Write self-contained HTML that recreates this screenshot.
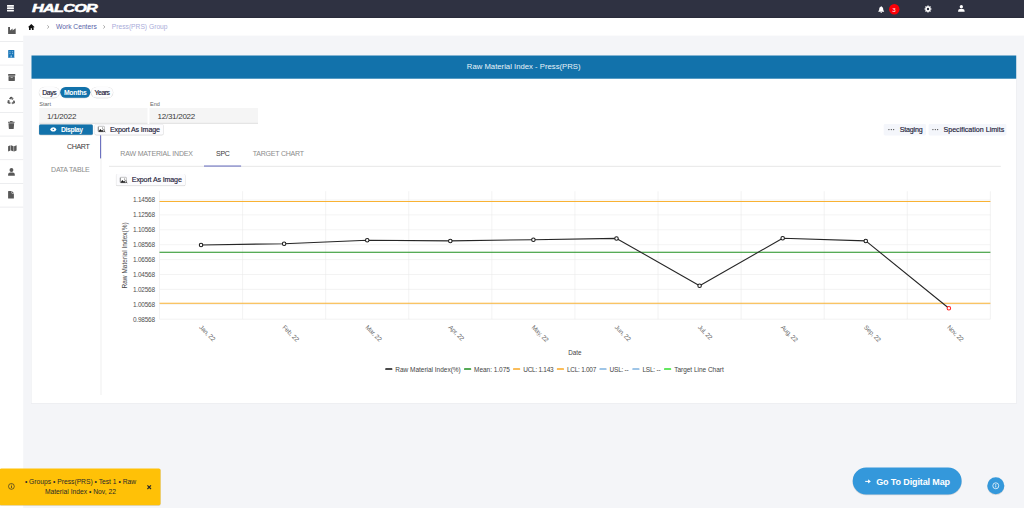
<!DOCTYPE html>
<html lang="en">
<head>
<meta charset="utf-8">
<title>Raw Material Index - Press(PRS)</title>
<style>
*{box-sizing:border-box;margin:0;padding:0}
html,body{width:1024px;height:508px;overflow:hidden}
body{background:#f4f5f8;font-family:"Liberation Sans",sans-serif;color:#333;position:relative}
.abs{position:absolute}
.t{position:absolute;white-space:nowrap;line-height:1}
svg{position:absolute;overflow:visible}
</style>
</head>
<body>

<svg id="bg" style="left:0;top:0" width="1024" height="508" viewBox="0 0 1024 508"><rect x="0" y="16" width="23.2" height="493" fill="#fff"/><rect x="23" y="16" width="1001" height="19.6" fill="#fff"/><rect x="0" y="0" width="1024" height="17.9" fill="#2f3242"/><rect x="0" y="16.9" width="1024" height="1" fill="#282b39"/><rect x="0" y="41.05" width="23.2" height="0.7" fill="#e4e5e8"/><rect x="0" y="64.72" width="23.2" height="0.7" fill="#e4e5e8"/><rect x="0" y="88.39" width="23.2" height="0.7" fill="#e4e5e8"/><rect x="0" y="112.06" width="23.2" height="0.7" fill="#e4e5e8"/><rect x="0" y="135.73" width="23.2" height="0.7" fill="#e4e5e8"/><rect x="0" y="159.40" width="23.2" height="0.7" fill="#e4e5e8"/><rect x="0" y="183.07" width="23.2" height="0.7" fill="#e4e5e8"/><rect x="0" y="206.74" width="23.2" height="0.7" fill="#e4e5e8"/><rect x="31.1" y="55.5" width="985.5" height="348.2" fill="#e6e8ec"/><rect x="31.5" y="55.5" width="984.7" height="347.7" fill="#fff"/><rect x="31.5" y="55.5" width="984.7" height="23.2" fill="#1272ab"/></svg>
<svg style="left:7.3px;top:5.2px" width="7" height="6.5" viewBox="0 0 7 6.5"><rect x="0" y="0" width="6.900" height="1.700" rx=".3" fill="#fff"/><rect x="0" y="2.350" width="6.900" height="1.700" rx=".3" fill="#fff"/><rect x="0" y="4.700" width="6.900" height="1.700" rx=".3" fill="#fff"/></svg>
<div class="t" id="logo" style="left:31.6px;top:2.4px;font-size:11.6px;font-weight:bold;font-style:italic;color:#fff;letter-spacing:-0.55px;-webkit-text-stroke:0.5px #fff;transform-origin:0 50%;transform:scaleX(1.405)">HALCOR</div>
<svg style="left:877.8px;top:5.6px" width="6.4" height="7" viewBox="0 0 6.4 7"><path d="M3.2.1a.45.45 0 0 1 .45.45v.25A2 2 0 0 1 5.2 2.8c0 1.4.4 1.9.85 2.35a.35.35 0 0 1-.25.6H.6a.35.35 0 0 1-.25-.6C.8 4.7 1.2 4.2 1.2 2.8A2 2 0 0 1 2.75.8V.55A.45.45 0 0 1 3.2.1z" fill="#fff"/><path d="M2.4 6.1h1.6a.8.8 0 0 1-1.6 0z" fill="#fff"/></svg>
<svg style="left:888.6px;top:4.2px" width="10.6" height="10.6" viewBox="0 0 10.6 10.6"><circle cx="5.3" cy="5.3" r="5.2" fill="#fb0007"/></svg>
<div class="t" style="top:7px;font-size:6.2px;color:#fff;left:693.90px;width:400px;text-align:center;">3</div>
<svg style="left:924.1px;top:4.5px" width="8" height="8" viewBox="-4 -4 8 8"><rect x="-0.62" y="-3.55" width="1.24" height="1.5" rx=".2" transform="rotate(0)" fill="#fff"/><rect x="-0.62" y="-3.55" width="1.24" height="1.5" rx=".2" transform="rotate(45)" fill="#fff"/><rect x="-0.62" y="-3.55" width="1.24" height="1.5" rx=".2" transform="rotate(90)" fill="#fff"/><rect x="-0.62" y="-3.55" width="1.24" height="1.5" rx=".2" transform="rotate(135)" fill="#fff"/><rect x="-0.62" y="-3.55" width="1.24" height="1.5" rx=".2" transform="rotate(180)" fill="#fff"/><rect x="-0.62" y="-3.55" width="1.24" height="1.5" rx=".2" transform="rotate(225)" fill="#fff"/><rect x="-0.62" y="-3.55" width="1.24" height="1.5" rx=".2" transform="rotate(270)" fill="#fff"/><rect x="-0.62" y="-3.55" width="1.24" height="1.5" rx=".2" transform="rotate(315)" fill="#fff"/><circle r="1.95" fill="none" stroke="#fff" stroke-width="1.5"/></svg>
<svg style="left:957.6px;top:5.1px" width="6.8" height="7" viewBox="0 0 6.8 7"><circle cx="3.35" cy="1.75" r="1.65" fill="#fff"/><path d="M.1 6.8V5.9a1.8 1.8 0 0 1 1.8-1.8h2.9a1.8 1.8 0 0 1 1.8 1.8v.9z" fill="#fff"/></svg>
<svg style="left:7.6px;top:26.6px" width="8" height="7.2" viewBox="0 0 8 7.2"><path d="M0.1 0.1h1.9v3.3l2.6-1.8v1.8l2.6-1.8h0.5v5.3H0.1z" fill="#585858"/></svg>
<svg style="left:7.8px;top:49.9px" width="6.6" height="7.8" viewBox="0 0 6.6 7.8"><rect x="0.2" y="0.1" width="6.1" height="7.3" rx=".5" fill="#1976b8"/><rect x="0" y="7.1" width="6.5" height=".5" fill="#1976b8"/><g fill="#8bbbe0"><rect x="1.4" y="1.3" width="1.2" height="1"/><rect x="3.9" y="1.3" width="1.2" height="1"/><rect x="1.4" y="3.1" width="1.2" height="1"/><rect x="3.9" y="3.1" width="1.2" height="1"/><rect x="2.5" y="5.4" width="1.5" height="2"/></g></svg>
<svg style="left:7.8px;top:73.7px" width="7.6" height="7.2" viewBox="0 0 7.6 7.2"><rect x="0.1" y="0.1" width="7.2" height="1.7" rx=".3" fill="#585858"/><path d="M0.5 2.3h6.4v4.2a.45.45 0 0 1-.45.45H.95A.45.45 0 0 1 .5 6.5z" fill="#585858"/><rect x="2.6" y="3.2" width="2.2" height=".8" rx=".3" fill="#c9c9c9"/></svg>
<svg style="left:7.3px;top:96.3px" width="8.4" height="8.4" viewBox="0 0 8.4 8.4"><path d="M2.71 3.23L3.23 2.33Q4.20 0.65 5.17 2.33L5.32 2.58M6.43 4.52L6.96 5.42Q7.92 7.10 5.99 7.10L5.69 7.10M3.46 7.10L2.41 7.10Q0.48 7.10 1.44 5.42L1.59 5.17" fill="none" stroke="#505050" stroke-width="1.5"/><path d="M5.94 3.67L4.06 3.31L6.57 1.86zM4.44 7.10L5.69 5.65L5.69 8.55zM2.22 4.08L2.85 5.89L0.34 4.44z" fill="#505050"/></svg>
<svg style="left:7.8px;top:120.7px" width="6.8" height="8.2" viewBox="0 0 6.8 8.2"><path d="M2.2.1h2.2l.4.6h1.5a.3.3 0 0 1 .3.3v.7H0V1A.3.3 0 0 1 .3.7h1.5z" fill="#585858"/><path d="M.45 2.2h5.7l-.4 5.2a.6.6 0 0 1-.6.55H1.45a.6.6 0 0 1-.6-.55z" fill="#585858"/></svg>
<svg style="left:7.6px;top:144.8px" width="9" height="6.8" viewBox="0 0 9 6.8"><path d="M0.1 1.3L2.5.3v5.3L.1 6.6z" fill="#585858"/><path d="M3 .3l2.6.9v5.3L3 5.6z" fill="#585858"/><path d="M6.1 1.2L8.6.2v5.3L6.1 6.5z" fill="#585858"/></svg>
<svg style="left:7.6px;top:167.9px" width="7" height="8" viewBox="0 0 7 8"><circle cx="3.45" cy="2" r="1.95" fill="#585858"/><path d="M.1 7.7V6.4a2 2 0 0 1 2-2h2.7a2 2 0 0 1 2 2v1.3z" fill="#585858"/></svg>
<svg style="left:7.7px;top:191.3px" width="6.2" height="7.8" viewBox="0 0 6.2 7.8"><path d="M.5.1h3.1v2a.4.4 0 0 0 .4.4h1.9v4.7a.4.4 0 0 1-.4.4H.5a.4.4 0 0 1-.4-.4V.5A.4.4 0 0 1 .5.1z" fill="#585858"/><path d="M4.1.2l1.7 1.8H4.1z" fill="#585858"/></svg>
<svg style="left:28.4px;top:23.8px" width="6.6" height="6.4" viewBox="0 0 6.6 6.4"><path d="M3.3.1L6.5 3l-.4.5-.5-.4v3h-1.7V4.2H2.7v1.9H1V3.1l-.5.4L.1 3z" fill="#111"/></svg>
<svg style="left:47.3px;top:24.9px" width="2.4" height="3.8" viewBox="0 0 2.4 3.8"><path d="M.3.3L2 1.9.3 3.5" fill="none" stroke="#8f8f8f" stroke-width=".75"/></svg>
<svg style="left:103.4px;top:24.9px" width="2.4" height="3.8" viewBox="0 0 2.4 3.8"><path d="M.3.3L2 1.9.3 3.5" fill="none" stroke="#8f8f8f" stroke-width=".75"/></svg>
<div class="t" style="top:24px;font-size:6.7px;color:#5a5fa8;left:56.00px;">Work Centers</div>
<div class="t" style="top:24px;font-size:6.7px;color:#a9acd9;left:111.80px;">Press(PRS) Group</div>
<div class="t" style="top:63px;font-size:7.72px;color:#e8f2f9;left:323.70px;width:400px;text-align:center;">Raw Material Index - Press(PRS)</div>
<svg style="left:0;top:0" width="1024" height="508"><rect x="38.60" y="86.7" width="21.40" height="11.900" rx="5.900" fill="rgba(0,0,0,.06)"/><rect x="38.95" y="86.9" width="20.70" height="11.300" rx="5.600" fill="rgba(0,0,0,.12)"/><rect x="39.1" y="86.9" width="20.40" height="10.900" rx="5.450" fill="#fdfdfe"/></svg>
<div class="t" style="top:90px;font-size:6.8px;color:#1c2038;letter-spacing:-0.35px;left:-150.70px;width:400px;text-align:center;-webkit-text-stroke:.18px;">Days</div>
<svg style="left:0;top:0" width="1024" height="508"><rect x="59.80" y="86.7" width="31.00" height="11.900" rx="5.900" fill="rgba(0,0,0,.06)"/><rect x="60.15" y="86.9" width="30.30" height="11.300" rx="5.600" fill="rgba(0,0,0,.12)"/><rect x="60.3" y="86.9" width="30.00" height="10.900" rx="5.450" fill="#1272ab"/></svg>
<div class="t" style="top:90px;font-size:6.8px;color:#fff;font-weight:bold;letter-spacing:-0.245px;left:-124.70px;width:400px;text-align:center;">Months</div>
<svg style="left:0;top:0" width="1024" height="508"><rect x="90.70" y="86.7" width="22.80" height="11.900" rx="5.900" fill="rgba(0,0,0,.06)"/><rect x="91.05" y="86.9" width="22.10" height="11.300" rx="5.600" fill="rgba(0,0,0,.12)"/><rect x="91.2" y="86.9" width="21.80" height="10.900" rx="5.450" fill="#fdfdfe"/></svg>
<div class="t" style="top:90px;font-size:6.8px;color:#1c2038;letter-spacing:-0.43px;left:-97.90px;width:400px;text-align:center;-webkit-text-stroke:.18px;">Years</div>
<div class="t" style="top:102px;font-size:5.6px;color:#666;left:39.20px;">Start</div>
<div class="t" style="top:102px;font-size:5.5px;color:#666;left:150.00px;">End</div>
<svg style="left:0;top:0" width="1024" height="508"><rect x="39.2" y="108" width="108.30" height="15.4" fill="#f5f5f5"/><rect x="39.2" y="122.9" width="108.30" height=".55" fill="#c9c9c9"/></svg>
<svg style="left:0;top:0" width="1024" height="508"><rect x="149.4" y="108" width="108.60" height="15.4" fill="#f5f5f5"/><rect x="149.4" y="122.9" width="108.60" height=".55" fill="#c9c9c9"/></svg>
<div class="t" style="top:113px;font-size:8px;color:#3a3a3a;letter-spacing:-0.25px;left:47.00px;">1/1/2022</div>
<div class="t" style="top:113px;font-size:8px;color:#3a3a3a;letter-spacing:-0.27px;left:157.60px;">12/31/2022</div>
<svg style="left:0;top:0" width="1024" height="508"><rect x="38.60" y="124.30" width="54.70" height="11.20" rx="1.900" fill="rgba(0,0,0,.07)"/><rect x="38.95" y="124.50" width="54.00" height="10.75" rx="1.600" fill="rgba(0,0,0,.13)"/><rect x="39.1" y="124.5" width="53.70" height="10.30" rx="1.400" fill="#1272ab"/></svg>
<svg style="left:49.6px;top:127.2px" width="6.6" height="4.8" viewBox="0 0 6.6 4.8"><path d="M.1 2.4C1 .9 2.1.2 3.300 .2S5.600 .9 6.500 2.400C5.600 3.900 4.500 4.600 3.300 4.600S1 3.900 .1 2.400z" fill="#fff"/><circle cx="3.300" cy="2.400" r=".7" fill="#1272ab"/></svg>
<div class="t" style="top:127px;font-size:6.8px;color:#fff;font-weight:bold;letter-spacing:-0.33px;left:60.90px;">Display</div>
<svg style="left:0;top:0" width="1024" height="508"><rect x="94.40" y="124.10" width="69.40" height="11.40" rx="1.900" fill="rgba(0,0,0,.07)"/><rect x="94.75" y="124.30" width="68.70" height="10.95" rx="1.600" fill="rgba(0,0,0,.13)"/><rect x="94.9" y="124.3" width="68.40" height="10.50" rx="1.400" fill="#fcfcfe"/></svg>
<svg style="left:97.7px;top:126.3px" width="7.6" height="6.8" viewBox="0 0 7.6 6.8"><rect x=".3" y=".3" width="6.1" height="5.5" rx=".5" fill="#fff" stroke="#8a8a8a" stroke-width=".5"/><path d="M.3 .8v4.500" stroke="#444" stroke-width=".5"/><path d="M.4 5.700l1.900-2.700 1.300 1.500.9-.8 1.300 2z" fill="#151515"/><circle cx="4.500" cy="2" r=".55" fill="#555"/><circle cx="5.600" cy="4.300" r=".9" fill="#fff" stroke="#444" stroke-width=".5"/><path d="M6.200 5l1 1.200" stroke="#222" stroke-width=".75"/></svg>
<div class="t" style="top:127px;font-size:7.1px;color:#1c2038;letter-spacing:-0.143px;left:109.90px;-webkit-text-stroke:.15px;">Export As Image</div>
<svg style="left:0;top:0" width="1024" height="508"><rect x="883.7" y="124.1" width="42.30" height="11.40" rx="1.400" fill="#f4f6fb"/></svg>
<svg style="left:0;top:0" width="1024" height="508"><rect x="928.6" y="124.1" width="77.80" height="11.40" rx="1.400" fill="#f4f6fb"/></svg>
<svg style="left:888.1px;top:129.0px" width="7" height="1.2" viewBox="0 0 7 1.2"><circle cx=".9" cy=".6" r=".6" fill="#333"/><circle cx="3.3" cy=".6" r=".6" fill="#333"/><circle cx="5.700" cy=".6" r=".6" fill="#333"/></svg>
<svg style="left:932.2px;top:129.0px" width="7" height="1.2" viewBox="0 0 7 1.2"><circle cx=".9" cy=".6" r=".6" fill="#333"/><circle cx="3.3" cy=".6" r=".6" fill="#333"/><circle cx="5.700" cy=".6" r=".6" fill="#333"/></svg>
<div class="t" style="top:127px;font-size:7.1px;color:#1c2038;letter-spacing:-0.166px;left:899.70px;-webkit-text-stroke:.15px;">Staging</div>
<div class="t" style="top:127px;font-size:7.1px;color:#1c2038;font-weight:-0.096;left:943.50px;-webkit-text-stroke:.15px;">Specification Limits</div>
<svg style="left:0;top:0" width="1024" height="508"><rect x="100.700" y="135.300" width=".6" height="259.800" fill="#e4e4e4"/><rect x="100.050" y="135.300" width="1.050" height="23.100" fill="#666cbd"/><rect x="109" y="165.900" width="891.800" height=".6" fill="#d8d8d8"/><rect x="204" y="165.500" width="37.100" height="1.100" fill="#6f75c2"/></svg>
<div class="t" style="top:144px;font-size:7.1px;color:#3a3a3a;letter-spacing:-0.38px;left:-310.60px;width:400px;text-align:right;">CHART</div>
<div class="t" style="top:166px;font-size:7px;color:#8c8c8c;letter-spacing:-0.23px;left:-310.50px;width:400px;text-align:right;">DATA TABLE</div>
<div class="t" style="top:150px;font-size:7px;color:#8c8c8c;letter-spacing:-0.17px;left:120.30px;">RAW MATERIAL INDEX</div>
<div class="t" style="top:150px;font-size:7px;color:#3a3a3a;letter-spacing:-0.27px;left:216.00px;">SPC</div>
<div class="t" style="top:150px;font-size:7px;color:#8c8c8c;letter-spacing:-0.21px;left:252.70px;">TARGET CHART</div>
<svg style="left:0;top:0" width="1024" height="508"><rect x="115.80" y="173.90" width="69.80" height="12.40" rx="1.900" fill="rgba(0,0,0,.07)"/><rect x="116.15" y="174.10" width="69.10" height="11.95" rx="1.600" fill="rgba(0,0,0,.13)"/><rect x="116.3" y="174.1" width="68.80" height="11.50" rx="1.400" fill="#fcfcfe"/></svg>
<svg style="left:119.7px;top:176.7px" width="7.6" height="6.8" viewBox="0 0 7.6 6.8"><rect x=".3" y=".3" width="6.1" height="5.5" rx=".5" fill="#fff" stroke="#8a8a8a" stroke-width=".5"/><path d="M.3 .8v4.500" stroke="#444" stroke-width=".5"/><path d="M.4 5.700l1.900-2.700 1.300 1.500.9-.8 1.300 2z" fill="#151515"/><circle cx="4.500" cy="2" r=".55" fill="#555"/><circle cx="5.600" cy="4.300" r=".9" fill="#fff" stroke="#444" stroke-width=".5"/><path d="M6.200 5l1 1.200" stroke="#222" stroke-width=".75"/></svg>
<div class="t" style="top:177px;font-size:7.1px;color:#1c2038;letter-spacing:-0.143px;left:131.80px;-webkit-text-stroke:.15px;">Export As Image</div>
<svg id="chart" style="left:0;top:0" width="1024" height="508" viewBox="0 0 1024 508" font-family="Liberation Sans, sans-serif">
<line x1="159.50" y1="191.2" x2="159.50" y2="319.2" stroke="#e9e9e9" stroke-width="0.55"/>
<line x1="242.59" y1="191.2" x2="242.59" y2="319.2" stroke="#e9e9e9" stroke-width="0.55"/>
<line x1="325.68" y1="191.2" x2="325.68" y2="319.2" stroke="#e9e9e9" stroke-width="0.55"/>
<line x1="408.77" y1="191.2" x2="408.77" y2="319.2" stroke="#e9e9e9" stroke-width="0.55"/>
<line x1="491.86" y1="191.2" x2="491.86" y2="319.2" stroke="#e9e9e9" stroke-width="0.55"/>
<line x1="574.95" y1="191.2" x2="574.95" y2="319.2" stroke="#e9e9e9" stroke-width="0.55"/>
<line x1="658.04" y1="191.2" x2="658.04" y2="319.2" stroke="#e9e9e9" stroke-width="0.55"/>
<line x1="741.13" y1="191.2" x2="741.13" y2="319.2" stroke="#e9e9e9" stroke-width="0.55"/>
<line x1="824.22" y1="191.2" x2="824.22" y2="319.2" stroke="#e9e9e9" stroke-width="0.55"/>
<line x1="907.31" y1="191.2" x2="907.31" y2="319.2" stroke="#e9e9e9" stroke-width="0.55"/>
<line x1="990.40" y1="191.2" x2="990.40" y2="319.2" stroke="#e9e9e9" stroke-width="0.55"/>
<line x1="159.5" y1="200.00" x2="990.4" y2="200.00" stroke="#e9e9e9" stroke-width="0.55"/>
<text x="132.9" y="202" font-size="6.45" textLength="22.2" lengthAdjust="spacing" fill="#4f4f4f">1.14568</text>
<line x1="159.5" y1="214.90" x2="990.4" y2="214.90" stroke="#e9e9e9" stroke-width="0.55"/>
<text x="132.9" y="217" font-size="6.45" textLength="22.2" lengthAdjust="spacing" fill="#4f4f4f">1.12568</text>
<line x1="159.5" y1="229.80" x2="990.4" y2="229.80" stroke="#e9e9e9" stroke-width="0.55"/>
<text x="132.9" y="232" font-size="6.45" textLength="22.2" lengthAdjust="spacing" fill="#4f4f4f">1.10568</text>
<line x1="159.5" y1="244.70" x2="990.4" y2="244.70" stroke="#e9e9e9" stroke-width="0.55"/>
<text x="132.9" y="247" font-size="6.45" textLength="22.2" lengthAdjust="spacing" fill="#4f4f4f">1.08568</text>
<line x1="159.5" y1="259.60" x2="990.4" y2="259.60" stroke="#e9e9e9" stroke-width="0.55"/>
<text x="132.9" y="262" font-size="6.45" textLength="22.2" lengthAdjust="spacing" fill="#4f4f4f">1.06568</text>
<line x1="159.5" y1="274.50" x2="990.4" y2="274.50" stroke="#e9e9e9" stroke-width="0.55"/>
<text x="132.9" y="277" font-size="6.45" textLength="22.2" lengthAdjust="spacing" fill="#4f4f4f">1.04568</text>
<line x1="159.5" y1="289.40" x2="990.4" y2="289.40" stroke="#e9e9e9" stroke-width="0.55"/>
<text x="132.9" y="292" font-size="6.45" textLength="22.2" lengthAdjust="spacing" fill="#4f4f4f">1.02568</text>
<line x1="159.5" y1="304.30" x2="990.4" y2="304.30" stroke="#e9e9e9" stroke-width="0.55"/>
<text x="132.9" y="307" font-size="6.45" textLength="22.2" lengthAdjust="spacing" fill="#4f4f4f">1.00568</text>
<line x1="159.5" y1="319.20" x2="990.4" y2="319.20" stroke="#e9e9e9" stroke-width="0.55"/>
<text x="132.9" y="322" font-size="6.45" textLength="22.2" lengthAdjust="spacing" fill="#4f4f4f">0.98568</text>
<line x1="159.5" y1="201.4" x2="990.4" y2="201.4" stroke="#f9b233" stroke-width="1.05"/>
<line x1="159.5" y1="303.2" x2="990.4" y2="303.2" stroke="#f9b233" stroke-width="1.05"/>
<line x1="159.5" y1="252.3" x2="990.4" y2="252.3" stroke="#1f8f1f" stroke-width="1.05"/>
<polyline points="201.05,245.00 284.13,243.70 367.23,240.30 450.31,240.90 533.40,239.70 616.50,238.40 699.59,285.70 782.68,238.30 865.76,240.90 948.86,308.20" fill="none" stroke="#262626" stroke-width="1.1" stroke-linejoin="round"/>
<circle cx="201.05" cy="245.00" r="1.75" fill="#fff" stroke="#1a1a1a" stroke-width="1.05"/>
<circle cx="284.13" cy="243.70" r="1.75" fill="#fff" stroke="#1a1a1a" stroke-width="1.05"/>
<circle cx="367.23" cy="240.30" r="1.75" fill="#fff" stroke="#1a1a1a" stroke-width="1.05"/>
<circle cx="450.31" cy="240.90" r="1.75" fill="#fff" stroke="#1a1a1a" stroke-width="1.05"/>
<circle cx="533.40" cy="239.70" r="1.75" fill="#fff" stroke="#1a1a1a" stroke-width="1.05"/>
<circle cx="616.50" cy="238.40" r="1.75" fill="#fff" stroke="#1a1a1a" stroke-width="1.05"/>
<circle cx="699.59" cy="285.70" r="1.75" fill="#fff" stroke="#1a1a1a" stroke-width="1.05"/>
<circle cx="782.68" cy="238.30" r="1.75" fill="#fff" stroke="#1a1a1a" stroke-width="1.05"/>
<circle cx="865.76" cy="240.90" r="1.75" fill="#fff" stroke="#1a1a1a" stroke-width="1.05"/>
<circle cx="948.86" cy="308.20" r="1.75" fill="#fff" stroke="#ff2020" stroke-width="1.05"/>
<text transform="translate(198.85,327.700) rotate(45)" font-size="6.4" letter-spacing="-0.2" fill="#6a6a6a">Jan, 22</text>
<text transform="translate(281.94,327.700) rotate(45)" font-size="6.4" letter-spacing="-0.2" fill="#6a6a6a">Feb, 22</text>
<text transform="translate(365.03,327.700) rotate(45)" font-size="6.4" letter-spacing="-0.2" fill="#6a6a6a">Mar, 22</text>
<text transform="translate(448.12,327.700) rotate(45)" font-size="6.4" letter-spacing="-0.2" fill="#6a6a6a">Apr, 22</text>
<text transform="translate(531.20,327.700) rotate(45)" font-size="6.4" letter-spacing="-0.2" fill="#6a6a6a">May, 22</text>
<text transform="translate(614.29,327.700) rotate(45)" font-size="6.4" letter-spacing="-0.2" fill="#6a6a6a">Jun, 22</text>
<text transform="translate(697.38,327.700) rotate(45)" font-size="6.4" letter-spacing="-0.2" fill="#6a6a6a">Jul, 22</text>
<text transform="translate(780.48,327.700) rotate(45)" font-size="6.4" letter-spacing="-0.2" fill="#6a6a6a">Aug, 22</text>
<text transform="translate(863.56,327.700) rotate(45)" font-size="6.4" letter-spacing="-0.2" fill="#6a6a6a">Sep, 22</text>
<text transform="translate(946.65,327.700) rotate(45)" font-size="6.4" letter-spacing="-0.2" fill="#6a6a6a">Nov, 22</text>
<text transform="translate(126.6,255.4) rotate(-90)" text-anchor="middle" font-size="6.5" textLength="66.2" lengthAdjust="spacing" fill="#444">Raw Material Index(%)</text>
<text x="574.8" y="355.2" text-anchor="middle" font-size="6.3" fill="#444">Date</text>
<rect x="385.2" y="368.3" width="7.2" height="1.55" rx=".6" fill="#111"/>
<text x="395.3" y="372" font-size="6.5" textLength="65.4" lengthAdjust="spacing" fill="#444">Raw Material Index(%)</text>
<rect x="464" y="368.3" width="7.2" height="1.55" rx=".6" fill="#1f8f1f"/>
<text x="474" y="372" font-size="6.5" textLength="35.9" lengthAdjust="spacing" fill="#444">Mean: 1.075</text>
<rect x="513" y="368.3" width="7.2" height="1.55" rx=".6" fill="#f9a825"/>
<text x="523.2" y="372" font-size="6.5" textLength="30.5" lengthAdjust="spacing" fill="#444">UCL: 1.143</text>
<rect x="556.8" y="368.3" width="7.2" height="1.55" rx=".6" fill="#f9a825"/>
<text x="567" y="372" font-size="6.5" textLength="29.3" lengthAdjust="spacing" fill="#444">LCL: 1.007</text>
<rect x="599.4" y="368.3" width="7.2" height="1.55" rx=".6" fill="#7fb2e0"/>
<text x="609.6" y="372" font-size="6.5" textLength="19.1" lengthAdjust="spacing" fill="#444">USL: --</text>
<rect x="632.3" y="368.3" width="7.2" height="1.55" rx=".6" fill="#7fb2e0"/>
<text x="642.4" y="372" font-size="6.5" textLength="18.2" lengthAdjust="spacing" fill="#444">LSL: --</text>
<rect x="664" y="368.3" width="7.2" height="1.55" rx=".6" fill="#33e02d"/>
<text x="674.2" y="372" font-size="6.5" textLength="49.5" lengthAdjust="spacing" fill="#444">Target Line Chart</text>
</svg>
<svg style="left:0;top:0" width="1024" height="508"><rect x="-0.3" y="468.9" width="161" height="36.800" rx="1.6" fill="rgba(0,0,0,.16)"/><rect x="-0.3" y="468.4" width="160.8" height="36.800" rx="1.6" fill="#ffc107"/></svg>
<svg style="left:8.1px;top:483.4px" width="6.8" height="6.8" viewBox="0 0 6.8 6.8"><circle cx="3.4" cy="3.4" r="2.9" fill="none" stroke="#2a2a2a" stroke-width=".65"/><rect x="3.05" y="2.9" width=".7" height="2.100" fill="#2a2a2a"/><circle cx="3.4" cy="2" r=".45" fill="#2a2a2a"/></svg>
<div class="t" style="top:479px;font-size:6.72px;color:#2a2a2a;left:-119.50px;width:400px;text-align:center;">&bull; Groups &bull; Press(PRS) &bull; Test 1 &bull; Raw</div>
<div class="t" style="top:489px;font-size:6.72px;color:#2a2a2a;left:-119.60px;width:400px;text-align:center;">Material Index &bull; Nov, 22</div>
<svg style="left:146.8px;top:484.600px" width="4.4" height="4.4" viewBox="0 0 4.4 4.4"><path d="M.4.4l3.600 3.600M4 .4L.4 4" stroke="#2a2a2a" stroke-width="1.15"/></svg>
<svg style="left:0;top:0" width="1024" height="508"><rect x="852.5" y="468.300" width="109.300" height="26.900" rx="13.45" fill="rgba(0,0,0,.13)"/><rect x="852.7" y="467.600" width="108.900" height="26.900" rx="13.45" fill="#3498db"/></svg>
<svg style="left:865.400px;top:478.800px" width="6" height="4.8" viewBox="0 0 6 4.8"><path d="M.2 2.400h3.600" fill="none" stroke="#fff" stroke-width="1"/><path d="M3.100 .3l2.700 2.100-2.700 2.100z" fill="#fff"/></svg>
<div class="t" style="top:478px;font-size:9px;color:#fff;font-weight:bold;letter-spacing:-0.125px;left:876.20px;">Go To Digital Map</div>
<svg style="left:987.4px;top:477.200px" width="17.6" height="17.6" viewBox="0 0 17.6 17.6"><circle cx="8.8" cy="9.300" r="8.6" fill="rgba(0,0,0,.12)"/><circle cx="8.8" cy="8.8" r="8.5" fill="#3498db"/><circle cx="8.8" cy="8.8" r="3" fill="none" stroke="#fff" stroke-width=".75"/><rect x="8.400" y="8.300" width=".8" height="2.100" fill="#fff"/><circle cx="8.8" cy="7.400" r=".5" fill="#fff"/></svg>
</body>
</html>
